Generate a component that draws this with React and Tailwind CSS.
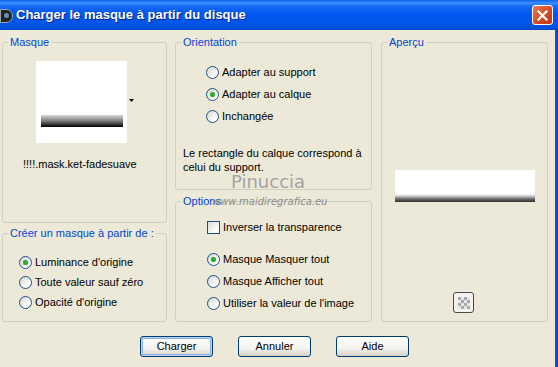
import React from "react";

const FONT = { fontFamily: '"Liberation Sans", Arial, sans-serif' };

// XP style radio button
const Radio = ({ checked, label }) => (
  <div className="flex items-center gap-[3px] h-[13px]">
    <span className="relative w-[13px] h-[13px] shrink-0 rounded-full border border-[#1C5180] bg-[linear-gradient(135deg,#D6D6CE,#FFFFFF_75%)]">
      {checked && (
        <span className="absolute left-[3px] top-[3px] w-[5px] h-[5px] rounded-full bg-[#2FAA2F] shadow-[0_0_1px_#7CD27C]" />
      )}
    </span>
    <span className="leading-[13px]">{label}</span>
  </div>
);

const Checkbox = ({ label }) => (
  <div className="flex items-center gap-[3px] h-[13px]">
    <span className="w-[13px] h-[13px] shrink-0 border border-[#1C5180] bg-[linear-gradient(135deg,#DCDCD4,#FFFFFF_75%)]" />
    <span className="leading-[13px]">{label}</span>
  </div>
);

// group box with its caption sitting on the top border
const Group = ({ title, className, children }) => (
  <div className={`relative border border-[#D0D0BF] rounded-[3px] ${className}`}>
    <span className="absolute -top-[7px] left-[5px] px-[2px] bg-[#ECE9D8] text-[#0046D5] leading-[13px]">
      {title}
    </span>
    {children}
  </div>
);

const Button = ({ label, primary }) => (
  <button
    className={`w-[73px] h-[21px] rounded-[3px] border border-[#003C74] bg-[linear-gradient(to_bottom,#FFFFFF,#F3F3EF_60%,#D6D0C5)] text-black leading-none ${
      primary ? "shadow-[inset_0_0_0_1px_#B9D1F9,inset_0_0_0_2px_#8DB2E3]" : ""
    }`}
  >
    {label}
  </button>
);

const Checker = () => (
  <div className="w-[21px] h-[21px] rounded-[3px] border border-[#4A4A4A] bg-[#F2F2EC] flex items-center justify-center">
    <div className="grid grid-cols-4 w-[12px] h-[12px]">
      {Array.from({ length: 16 }).map((_, i) => (
        <span
          key={i}
          className={(Math.floor(i / 4) + i) % 2 === 0 ? "bg-[#A9A9A9]" : "bg-[#E6E6E6]"}
        />
      ))}
    </div>
  </div>
);

export default function App() {
  return (
    <div className="w-[558px] h-[367px] overflow-hidden bg-[#ECE9D8] text-[11px] text-black relative" style={FONT}>
      {/* title bar */}
      <div className="h-[30px] flex items-center bg-[linear-gradient(to_bottom,#0A5FE8_0%,#3C8FFF_10%,#1468F5_22%,#0058EE_45%,#0055E6_85%,#0048CC_100%)]">
        <div className="w-[13px] h-[14px] ml-0 mt-[1px] rounded-r-full bg-[#222] border border-[#9AA] flex items-center justify-center">
          <span className="w-[5px] h-[5px] rounded-full bg-[#6B8FB8]" />
        </div>
        <span className="ml-[3px] text-white font-bold text-[13px] [text-shadow:1px_1px_0_#0A1E8C]">
          Charger le masque à partir du disque
        </span>
        <div className="ml-auto mr-[5px] w-[21px] h-[20px] rounded-[3px] border border-white bg-[linear-gradient(135deg,#E97A5C,#D6451F_60%,#C03A17)] flex items-center justify-center">
          <svg width="11" height="11" viewBox="0 0 11 11">
            <path d="M1.5 1.5 L9.5 9.5 M9.5 1.5 L1.5 9.5" stroke="white" strokeWidth="2.2" strokeLinecap="square" />
          </svg>
        </div>
      </div>

      {/* body */}
      <div className="flex h-[337px]">
        <div className="w-[555px] pt-[12px]">
          <div className="flex pl-[2px]">
            {/* left column */}
            <div className="w-[165px] flex flex-col gap-[10px]">
              <Group title="Masque" className="h-[181px]">
                <div className="flex items-center ml-[33px] mt-[18px]">
                  <div className="w-[91px] h-[82px] bg-white pt-[54px] pl-[5px]">
                    <div className="w-[82px] h-[12px] bg-[linear-gradient(to_bottom,#D8D8D8,#7A7A7A_50%,#000000)]" />
                  </div>
                  <svg width="5" height="3" className="ml-[2px] -mt-[4px]">
                    <path d="M0 0 H5 L2.5 3 Z" fill="#000" />
                  </svg>
                </div>
                <div className="ml-[20px] mt-[15px] leading-[13px]">!!!!.mask.ket-fadesuave</div>
              </Group>
              <Group title="Créer un masque à partir de :" className="h-[89px]">
                <div className="flex flex-col gap-[7px] ml-[16px] mt-[22px]">
                  <Radio checked label="Luminance d'origine" />
                  <Radio label="Toute valeur sauf zéro" />
                  <Radio label="Opacité d'origine" />
                </div>
              </Group>
            </div>

            {/* middle column */}
            <div className="w-[197px] ml-[8px] flex flex-col gap-[11px]">
              <Group title="Orientation" className="h-[148px]">
                <div className="flex flex-col gap-[9px] ml-[30px] mt-[23px]">
                  <Radio label="Adapter au support" />
                  <Radio checked label="Adapter au calque" />
                  <Radio label="Inchangée" />
                </div>
                <div className="ml-[7px] mt-[23px] leading-[14px]">
                  Le rectangle du calque correspond à
                  <br />
                  celui du support.
                </div>
              </Group>
              <Group title="Options" className="h-[121px]">
                <div className="ml-[31px] mt-[19px]">
                  <Checkbox label="Inverser la transparence" />
                </div>
                <div className="flex flex-col gap-[9px] ml-[31px] mt-[19px]">
                  <Radio checked label="Masque Masquer tout" />
                  <Radio label="Masque Afficher tout" />
                  <Radio label="Utiliser la valeur de l'image" />
                </div>
              </Group>
            </div>

            {/* right column */}
            <Group title="Aperçu" className="w-[167px] h-[280px] ml-[9px]">
              <div className="ml-[13px] mt-[127px] w-[140px] h-[32px] bg-[linear-gradient(to_bottom,#FFFFFF_0%,#FFFFFF_75%,#C8C8C8_82%,#6E6E6E_90%,#2E2E2E_100%)]" />
              <div className="ml-[71px] mt-[90px]">
                <Checker />
              </div>
            </Group>
          </div>

          {/* buttons */}
          <div className="flex gap-[25px] pl-[140px] mt-[14px]">
            <Button label="Charger" primary />
            <Button label="Annuler" />
            <Button label="Aide" />
          </div>
        </div>
        <div className="w-[3px] bg-[linear-gradient(to_right,#0A5AE6,#0042C0)]" />
      </div>

      {/* watermark over the dialog */}
      <div className="absolute left-[231px] top-[171px] text-[18px] leading-[22px] text-[#A3A3A3] pointer-events-none" style={{ fontFamily: '"DejaVu Sans", sans-serif' }}>
        Pinuccia
      </div>
      <div className="absolute left-[212px] top-[196px] text-[10px] leading-[12px] text-[#8C8C8C] italic pointer-events-none" style={{ fontFamily: '"DejaVu Sans", sans-serif' }}>
        www.maidiregrafica.eu
      </div>
    </div>
  );
}
